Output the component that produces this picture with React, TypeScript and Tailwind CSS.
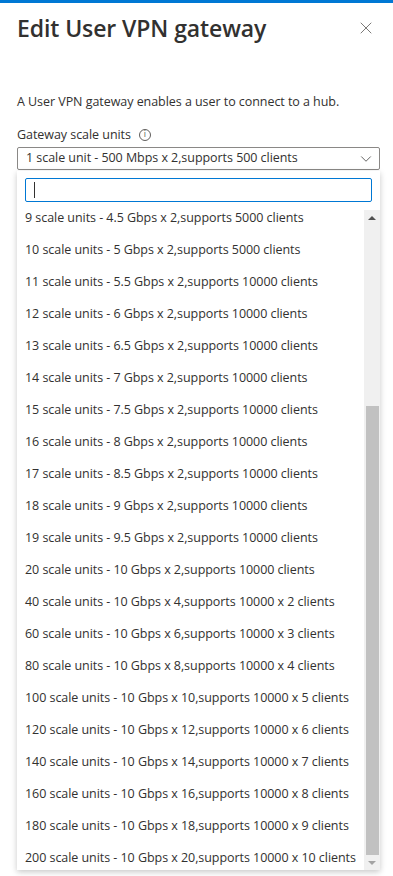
import { X, ChevronDown } from 'lucide-react';

const options = [
  '9 scale units - 4.5 Gbps x 2,supports 5000 clients',
  '10 scale units - 5 Gbps x 2,supports 5000 clients',
  '11 scale units - 5.5 Gbps x 2,supports 10000 clients',
  '12 scale units - 6 Gbps x 2,supports 10000 clients',
  '13 scale units - 6.5 Gbps x 2,supports 10000 clients',
  '14 scale units - 7 Gbps x 2,supports 10000 clients',
  '15 scale units - 7.5 Gbps x 2,supports 10000 clients',
  '16 scale units - 8 Gbps x 2,supports 10000 clients',
  '17 scale units - 8.5 Gbps x 2,supports 10000 clients',
  '18 scale units - 9 Gbps x 2,supports 10000 clients',
  '19 scale units - 9.5 Gbps x 2,supports 10000 clients',
  '20 scale units - 10 Gbps x 2,supports 10000 clients',
  '40 scale units - 10 Gbps x 4,supports 10000 x 2 clients',
  '60 scale units - 10 Gbps x 6,supports 10000 x 3 clients',
  '80 scale units - 10 Gbps x 8,supports 10000 x 4 clients',
  '100 scale units - 10 Gbps x 10,supports 10000 x 5 clients',
  '120 scale units - 10 Gbps x 12,supports 10000 x 6 clients',
  '140 scale units - 10 Gbps x 14,supports 10000 x 7 clients',
  '160 scale units - 10 Gbps x 16,supports 10000 x 8 clients',
  '180 scale units - 10 Gbps x 18,supports 10000 x 9 clients',
  '200 scale units - 10 Gbps x 20,supports 10000 x 10 clients',
];

export default function App() {
  return (
    <div className="w-[393px] h-[876px] bg-white overflow-hidden text-[#323130] font-['Open_Sans',sans-serif]">
      {/* top accent */}
      <div className="h-[3px] bg-[#0078d4]" />

      {/* header */}
      <div className="flex items-center justify-between pl-[17px] pr-[17px] pt-[9px]">
        <h1 className="text-[23px] font-semibold leading-[32px] tracking-[-0.1px]">Edit User VPN gateway</h1>
        <X className="w-[20px] h-[20px] text-[#605e5c]" strokeWidth={1} />
      </div>

      <div className="pl-[17px] pr-[13px]">
        <p className="mt-[49px] text-[12.5px] leading-[18px] tracking-[-0.05px]">
          A User VPN gateway enables a user to connect to a hub.
        </p>

        <div className="mt-[15px] flex items-center gap-[8px] text-[12.5px] leading-[18px] tracking-[-0.05px]">
          <span>Gateway scale units</span>
          <span className="w-[12px] h-[12px] rounded-full border border-[#605e5c] flex items-center justify-center text-[8px] leading-none text-[#605e5c] font-['DejaVu_Sans',sans-serif]">
            i
          </span>
        </div>

        {/* select */}
        <div className="mt-[3px] h-[23px] border border-[#8a8886] rounded-[2px] flex items-center justify-between pl-[8px] pr-[4px] text-[12.5px] tracking-[-0.05px]">
          <span>1 scale unit - 500 Mbps x 2,supports 500 clients</span>
          <ChevronDown className="w-[18px] h-[18px] text-[#323130]" strokeWidth={1} />
        </div>

        {/* dropdown panel */}
        <div className="mt-[1px] h-[699px] bg-white shadow-[0_2px_6px_rgba(0,0,0,0.22)] flex flex-col overflow-hidden">
          <div className="pt-[7px] pl-[8px] pr-[8px]">
            <div className="h-[24px] border border-[#0078d4] rounded-[2px] flex items-center pl-[8px]">
              <div className="w-px h-[16px] bg-[#323130]" />
            </div>
          </div>

          <div className="flex flex-1 min-h-0">
            <ul className="flex-1 overflow-hidden text-[12.5px] tracking-[-0.05px]">
              {options.map((o) => (
                <li key={o} className="h-[32px] flex items-center pl-[8px] whitespace-nowrap">
                  {o}
                </li>
              ))}
            </ul>

            {/* scrollbar */}
            <div className="w-[16px] mt-[8px] bg-[#f0f0f0] flex flex-col items-center">
              <div className="h-[16px] flex items-center justify-center">
                <div className="w-0 h-0 border-l-[4px] border-r-[4px] border-b-[4px] border-l-transparent border-r-transparent border-b-[#505050]" />
              </div>
              <div className="mt-[180px] w-[13px] flex-1 bg-[#c1c1c1]" />
              <div className="h-[15px] flex items-center justify-center">
                <div className="w-0 h-0 border-l-[4px] border-r-[4px] border-t-[4px] border-l-transparent border-r-transparent border-t-[#a3a3a3]" />
              </div>
            </div>
          </div>
        </div>
      </div>
    </div>
  );
}
